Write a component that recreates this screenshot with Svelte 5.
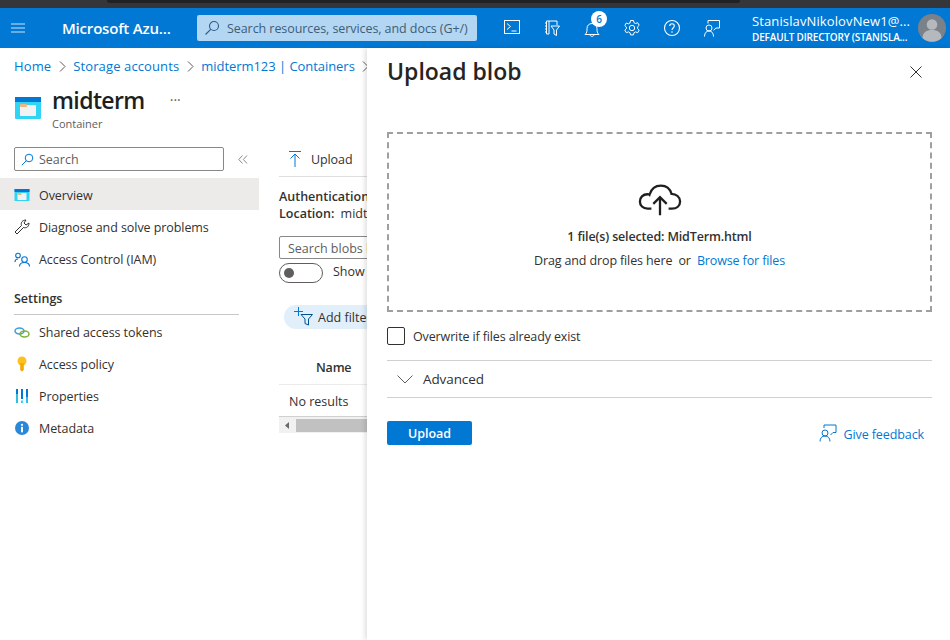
<script>
  const crumbs = ['Home', 'Storage accounts', 'midterm123 | Containers'];
</script>

<div class="strip"><div class="strip-dark"></div></div>

<header class="top">
  <svg class="burger" width="14" height="10" viewBox="0 0 14 10"><path d="M0 1h14M0 5h14M0 9h14" stroke="#cfe4f7" stroke-width="1.2"/></svg>
  <div class="brand">Microsoft Azu...</div>
  <div class="gsearch">
    <svg width="16" height="16" viewBox="0 0 16 16" fill="none" stroke="#2b5c8a" stroke-width="1.1"><circle cx="10" cy="6" r="4.5"/><path d="M6.7 9.3 1.5 14.5"/></svg>
    <span>Search resources, services, and docs (G+/)</span>
  </div>
  <div class="ticons">
    <svg class="ti" width="16" height="16" viewBox="0 0 16 16" fill="none" stroke="#fff"><rect x=".5" y=".5" width="15" height="13"/><path d="M3 3.5 6.5 6.5 3 9.5M7.5 11h5"/></svg>
    <svg class="ti" width="18" height="18" viewBox="0 0 18 18" fill="none" stroke="#fff"><path d="M6 15H3.5V2H14V6M2 4h1.500M2 7h1.500M2 10h1.500M2 13h1.500M6 2v13"/><path d="M8 7h8.500L13.500 11v5.500l-2.500-1.500V11z"/></svg>
    <div class="bell">
      <svg width="16" height="18" viewBox="0 0 16 18" fill="none" stroke="#fff"><path d="M1 14.500c2-1.500 2-3.500 2-6 0-3 2-5 5-5s5 2 5 5c0 2.500 0 4.500 2 6zM6 14.500c0 2.500 4 2.500 4 0"/></svg>
      <span class="badge">6</span>
    </div>
    <svg class="ti" width="18" height="18" viewBox="0 0 18 18" fill="none" stroke="#fff"><circle cx="9" cy="9" r="2.700"/><path d="M7.500 1.500h3l.5 2.200 1.600.8 2.100-.8 1.500 2.600-1.600 1.500v1.800l1.600 1.500-1.500 2.600-2.100-.8-1.600.8-.5 2.200h-3l-.5-2.200-1.600-.8-2.100.8-1.500-2.600 1.600-1.500V8.100L1.800 6.600l1.500-2.600 2.100.8L7 4z" stroke-linejoin="round"/></svg>
    <svg class="ti" width="18" height="18" viewBox="0 0 18 18" fill="none" stroke="#fff"><circle cx="9" cy="9" r="7.500" stroke-width="1.100"/><path d="M6.700 7c0-1.500 1-2.300 2.300-2.300S11.300 5.500 11.300 7c0 2-2.300 2-2.300 4" stroke-width="1.100"/><circle cx="9" cy="13" r=".8" fill="#fff" stroke="none"/></svg>
    <svg class="ti" width="16" height="17" viewBox="0 0 16 17" fill="none" stroke="#fff"><circle cx="5" cy="8" r="3"/><path d="M.5 16.500c0-3.500 1.800-5.500 4.500-5.500s4.500 2 4.500 5.500M4 3.500V.5h11.500V8H12L9.500 10.300"/></svg>
  </div>
  <div class="user">
    <div class="uname">StanislavNikolovNew1@...</div>
    <div class="udir">DEFAULT DIRECTORY (STANISLA...</div>
  </div>
  <div class="avatar">
    <svg width="28" height="28" viewBox="0 0 28 28"><circle cx="14" cy="14" r="14" fill="#7b8189"/><circle cx="14" cy="10.500" r="5.300" fill="#b5b9be"/><path d="M4.500 24c0-5.500 4-8 9.500-8s9.500 2.500 9.500 8a14 14 0 0 1-19 0z" fill="#b5b9be"/></svg>
  </div>
</header>

<div class="page">
  <nav class="crumbs">
    {#each crumbs as c}
      <a href="#/">{c}</a>
      <svg width="7" height="11" viewBox="0 0 7 11" fill="none" stroke="#605e5c"><path d="M1 .5 6 5.500 1 10.500"/></svg>
    {/each}
  </nav>

  <div class="title-row">
    <svg class="cont-icon" width="26" height="22" viewBox="0 0 26 22"><rect width="26" height="22" rx="1" fill="#32d4f5"/><rect width="26" height="5" fill="#0078d4"/><rect x="5" y="8" width="16" height="11" rx="1" fill="#f2f2f2"/><rect x="5" y="7" width="7" height="3" rx="1" fill="#f0b67a"/></svg>
    <div class="title-text">
      <div class="title-line"><h1>midterm</h1><span class="more">···</span></div>
      <div class="sub">Container</div>
    </div>
  </div>

  <div class="columns">
    <aside class="side">
      <div class="side-search-row">
        <div class="side-search">
          <svg width="13" height="13" viewBox="0 0 13 13" fill="none" stroke="#0078d4"><circle cx="8" cy="5" r="3.800"/><path d="M5.300 7.700.8 12.200"/></svg>
          <span>Search</span>
        </div>
        <svg class="collapse" width="10" height="9" viewBox="0 0 10 9" fill="none" stroke="#8a8886"><path d="M4.500.5.800 4.500l3.700 4M9 .5 5.300 4.500 9 8.500"/></svg>
      </div>
      <div class="item active">
        <svg width="15" height="12" viewBox="0 0 15 12"><rect width="15" height="12" fill="#32d4f5"/><rect width="15" height="3" fill="#0078d4"/><rect x="3" y="4" width="9" height="7" fill="#f2f2f2"/><rect x="3" y="4" width="4" height="2" fill="#f0b67a"/></svg>
        <span>Overview</span>
      </div>
      <div class="item">
        <svg width="16" height="16" viewBox="0 0 16 16" fill="none" stroke="#323130"><path d="M1 13 7.500 6.500C6.500 3.500 8.500 1 12 1l-2 3 2 2 3-2c0 3.500-2.500 5.500-5.500 4.500L3 15z" stroke-linejoin="round"/></svg>
        <span>Diagnose and solve problems</span>
      </div>
      <div class="item">
        <svg width="16" height="15" viewBox="0 0 16 15" fill="none" stroke="#0078d4" stroke-width="1.100"><circle cx="4" cy="3.500" r="2.300"/><circle cx="10.500" cy="7.500" r="2.800"/><path d="M1 10c0-2 1-3 3-3M5.500 14.500c0-2.500 2-4 5-4s5 1.500 5 4"/></svg>
        <span>Access Control (IAM)</span>
      </div>
      <div class="section">Settings</div>
      <div class="item">
        <svg width="16" height="11" viewBox="0 0 16 11" fill="none" stroke-width="1.500"><ellipse cx="5.500" cy="4" rx="4.500" ry="3" stroke="#3f9fe0"/><ellipse cx="10.500" cy="7" rx="4.500" ry="3" stroke="#7fb239"/></svg>
        <span>Shared access tokens</span>
      </div>
      <div class="item">
        <svg width="16" height="16" viewBox="0 0 16 16"><circle cx="8" cy="5" r="4.500" fill="#fcc11e"/><path d="M6.200 7h3.600v7L8 15.500 6.200 14z" fill="#f5a800"/></svg>
        <span>Access policy</span>
      </div>
      <div class="item">
        <svg width="16" height="16" viewBox="0 0 16 16" fill="none" stroke-width="2"><path d="M3 1v14" stroke="#32bedd"/><path d="M3 1v5" stroke="#0078d4"/><path d="M8 1v10" stroke="#0078d4"/><path d="M8 12.500V15" stroke="#32d4f5"/><path d="M13 1v14" stroke="#32bedd"/><path d="M13 1v8" stroke="#0078d4"/></svg>
        <span>Properties</span>
      </div>
      <div class="item">
        <svg width="14" height="14" viewBox="0 0 14 14"><circle cx="7" cy="7" r="7" fill="#2b88d8"/><circle cx="7" cy="3.800" r="1.100" fill="#fff"/><rect x="6" y="5.800" width="2" height="5.500" fill="#fff"/></svg>
        <span>Metadata</span>
      </div>
    </aside>

    <section class="content">
      <div class="toolbar">
        <svg width="12" height="16" viewBox="0 0 12 16" fill="none" stroke="#0078d4"><path d="M0 .5h12M6 3v13M1.500 7.500 6 3l4.500 4.500"/></svg>
        <span>Upload</span>
      </div>
      <div class="auth"><b>Authentication method:</b> Access key</div>
      <div class="loc"><b>Location:</b> midterm</div>
      <div class="blobsearch">Search blobs by prefix</div>
      <div class="toggle-row">
        <div class="toggle"><i></i></div>
        <span>Show deleted blobs</span>
      </div>
      <div class="pill">
        <svg width="20" height="20" viewBox="0 0 20 20" fill="none" stroke="#0078d4"><path d="M4.500 0v9M0 4.500h9"/><path d="M7 7.500h11.500L14.500 12v6l-3.500-1.500V12z" stroke="#00508f"/></svg>
        <span>Add filter</span>
      </div>
      <div class="thead">Name</div>
      <div class="noresults">No results</div>
      <div class="scrollbar">
        <svg width="4" height="7" viewBox="0 0 4 7"><path d="M4 0v7L0 3.500z" fill="#6a6a6a"/></svg>
        <div class="thumb"></div>
      </div>
    </section>
  </div>
</div>

<aside class="panel">
  <div class="panel-head">
    <h2>Upload blob</h2>
    <svg width="12" height="12" viewBox="0 0 12 12" fill="none" stroke="#323130"><path d="M.5.500l11 11M11.500.500l-11 11"/></svg>
  </div>
  <div class="drop">
    <svg width="44" height="34" viewBox="0 0 46 34" fill="none" stroke="#201f1e" stroke-width="2.400"><path d="M14 26H10C5 26 2 22.500 2 18.500S5 11 10 11c1.500 0 2 .5 2 .5C14 5 19 2 24 2c5.500 0 9.500 3.500 11 8.500 5 0 9 3.500 9 8s-3.500 7.500-8.500 7.500H32"/><path d="M23 33V14M16 21l7-7 7 7"/></svg>
    <div class="selected">1 file(s) selected: MidTerm.html</div>
    <div class="dragline">Drag and drop files here <span class="or">or</span> <a href="#/">Browse for files</a></div>
  </div>
  <label class="check"><span class="box"></span>Overwrite if files already exist</label>
  <div class="advanced">
    <svg width="16" height="9" viewBox="0 0 16 9" fill="none" stroke="#605e5c"><path d="M.5.500 8 8 15.500.500"/></svg>
    <span>Advanced</span>
  </div>
  <div class="actions">
    <button>Upload</button>
    <a class="feedback" href="#/">
      <svg width="18" height="18" viewBox="0 0 18 18" fill="none" stroke="#0078d4"><circle cx="6" cy="9" r="3"/><path d="M1 17.500c0-3.500 2-5.500 5-5.500s5 2 5 5.500M5 4V1h12v7.500h-3L11.500 11"/></svg>
      <span>Give feedback</span>
    </a>
  </div>
</aside>

<style>
  :global(body) {
    margin: 0;
    background: #fff;
    font-family: "Open Sans", "Noto Sans", "Liberation Sans", sans-serif;
    color: #323130;
    overflow: hidden;
  }
  a { color: #0078d4; text-decoration: none; }
  b { font-weight: 600; }

  .strip { height: 8px; background: #35363a; }
  .strip-dark { margin-left: 107px; width: 633px; height: 3px; background: #202124; border-radius: 0 0 6px 6px; }

  .top {
    height: 40px;
    background: #0078d4;
    display: flex;
    align-items: center;
    color: #fff;
  }
  .burger { margin-left: 11px; }
  .brand { margin-left: 37px; width: 135px; font-size: 15px; font-weight: 600; letter-spacing: -0.2px; white-space: nowrap; }
  .gsearch {
    width: 280px;
    height: 26px;
    box-sizing: border-box;
    background: #b3d6f2;
    border-radius: 2px;
    display: flex;
    align-items: center;
    padding-left: 7px;
    gap: 7px;
    font-size: 12.5px;
    letter-spacing: -0.07px;
    color: #3d5d78;
    white-space: nowrap;
  }
  .ticons { margin-left: 27px; width: 248px; display: flex; align-items: center; flex: none; }
  .ti { flex: none; }
  .ticons > :nth-child(1) { margin-right: 23px; }
  .ticons > :nth-child(2) { margin-right: 23px; }
  .ticons > :nth-child(4) { margin: 0 22px 0 23px; }
  .ticons > :nth-child(5) { margin-right: 23px; }
  .bell { position: relative; display: flex; width: 16px; height: 18px; margin-top: 2px; }
  .badge {
    position: absolute;
    left: 7px;
    top: -9px;
    width: 16px;
    height: 16px;
    border-radius: 50%;
    background: #fff;
    color: #0078d4;
    font-size: 10px;
    font-weight: 600;
    text-align: center;
    line-height: 16px;
  }
  .user { width: 166px; flex: none; }
  .uname { font-size: 13px; line-height: 18px; white-space: nowrap; letter-spacing: 0.12px; }
  .udir { font-size: 10px; line-height: 14px; font-weight: 600; white-space: nowrap; letter-spacing: -0.18px; }
  .avatar { display: flex; width: 28px; flex: none; }

  .page { height: 592px; overflow: hidden; }
  .crumbs { height: 36px; padding-left: 14px; display: flex; align-items: center; gap: 7.5px; font-size: 13px; letter-spacing: 0.12px; white-space: nowrap; }
  .crumbs a:nth-of-type(3) { letter-spacing: -0.05px; }
  .title-row { display: flex; padding-left: 15px; height: 50px; gap: 11px; }
  .cont-icon { margin-top: 13px; flex: none; }
  .title-line { display: flex; align-items: center; height: 28px; margin-top: 2px; }
  h1 { margin: 0; font-size: 23px; font-weight: 600; letter-spacing: -0.6px; color: #201f1e; line-height: 28px; }
  .more { margin-left: 25px; font-size: 14px; color: #605e5c; margin-top: -2px; }
  .sub { font-size: 11px; line-height: 14px; margin-top: 3px; color: #605e5c; }

  .columns { display: flex; margin-top: 13px; }
  .side { width: 259px; flex: none; font-size: 12.5px; }
  .side-search-row { display: flex; align-items: center; padding-left: 14px; height: 24px; margin-bottom: 7px; }
  .side-search {
    width: 210px;
    height: 24px;
    box-sizing: border-box;
    border: 1px solid #8a8886;
    border-radius: 2px;
    display: flex;
    align-items: center;
    gap: 5px;
    padding-left: 6px;
    color: #605e5c;
  }
  .collapse { margin-left: 14px; }
  .item { height: 32px; box-sizing: border-box; padding: 2px 0 0 14px; display: flex; align-items: center; white-space: nowrap; letter-spacing: -0.07px; }
  .item svg { width: 16px; flex: none; margin-right: 9px; }
  .item.active { background: #edebe9; }
  .section { margin: 17px 20px 0 14px; height: 23px; border-bottom: 1px solid #c8c6c4; font-weight: 600; font-size: 12.5px; line-height: 16px; }

  .content { margin-left: 20px; width: 400px; flex: none; white-space: nowrap; font-size: 12.5px; }
  .toolbar { display: flex; align-items: center; height: 24px; padding-bottom: 5px; gap: 10px; padding-left: 10px; border-bottom: 1px solid #e1dfdd; letter-spacing: -0.1px; }
  .auth { margin-top: 11px; line-height: 17px; }
  .loc { line-height: 17px; }
  .loc b { margin-right: 3px; }
  .blobsearch { margin-top: 14px; height: 23px; box-sizing: border-box; border: 1px solid #8a8886; border-radius: 2px 0 0 2px; padding-left: 8px; line-height: 23px; color: #605e5c; }
  .toggle-row { display: flex; align-items: center; gap: 10px; margin-top: 3px; height: 21px; }
  .toggle-row span { margin-top: -2px; }
  .toggle { width: 44px; height: 20px; box-sizing: border-box; border: 1px solid #605e5c; border-radius: 10px; padding: 4px; }
  .toggle i { display: block; width: 10px; height: 10px; border-radius: 50%; background: #605e5c; }
  .pill { margin: 22px 0 0 5px; height: 24px; border-radius: 12px; background: #e1effa; display: flex; align-items: center; padding-left: 10px; gap: 4px; width: 190px; }
  .thead { margin-top: 26px; padding-left: 37px; height: 29px; border-bottom: 1px solid #edebe9; font-weight: 600; line-height: 26px; letter-spacing: -0.2px; }
  .noresults { padding-left: 10px; height: 32px; line-height: 33px; box-sizing: border-box; border-bottom: 1px solid #d2d0ce; }
  .scrollbar { height: 16px; background: #f1f1f1; display: flex; align-items: center; padding-left: 6px; }
  .thumb { margin-left: 7px; height: 13px; flex: 1; background: #c1c1c1; }

  .panel {
    position: absolute;
    left: 367px;
    top: 48px;
    width: 583px;
    height: 592px;
    box-sizing: border-box;
    padding: 0 18px 0 20px;
    background: #fff;
    box-shadow: -2px 0 5px rgba(0, 0, 0, 0.13);
    font-size: 12.5px;
  }
  .panel-head { height: 84px; display: flex; justify-content: space-between; align-items: flex-start; padding-right: 10px; }
  h2 { margin: 5px 0 0; font-size: 23px; font-weight: 600; line-height: 36px; color: #252423; letter-spacing: 0; }
  .panel-head svg { margin-top: 18px; }
  .drop {
    height: 180px;
    box-sizing: border-box;
    border: 2px dashed #a19f9d;
    display: flex;
    flex-direction: column;
    align-items: center;
    padding-top: 49px;
  }
  .selected { margin-top: 11px; font-weight: 600; line-height: 18px; letter-spacing: -0.15px; }
  .dragline { margin-top: 6px; line-height: 18px; letter-spacing: -0.13px; }
  .or { margin: 0 3px; }
  .check { display: flex; align-items: center; gap: 8px; margin-top: 15px; height: 18px; letter-spacing: -0.13px; }
  .box { width: 18px; height: 18px; box-sizing: border-box; border: 1px solid #323130; border-radius: 2px; }
  .advanced { margin-top: 15px; height: 36px; border-top: 1px solid #d2d0ce; border-bottom: 1px solid #d2d0ce; display: flex; align-items: center; gap: 10px; padding-left: 10px; font-size: 13.5px; letter-spacing: -0.1px; }
  .actions { display: flex; justify-content: space-between; align-items: center; margin-top: 23px; padding-right: 8px; }
  button { width: 85px; height: 24px; border: 0; border-radius: 2px; background: #0078d4; color: #fff; font: 600 12.5px "Open Sans", sans-serif; padding: 0; }
  .feedback { display: flex; align-items: center; gap: 7px; letter-spacing: -0.1px; }
  .feedback span { margin-top: 2px; }
</style>
